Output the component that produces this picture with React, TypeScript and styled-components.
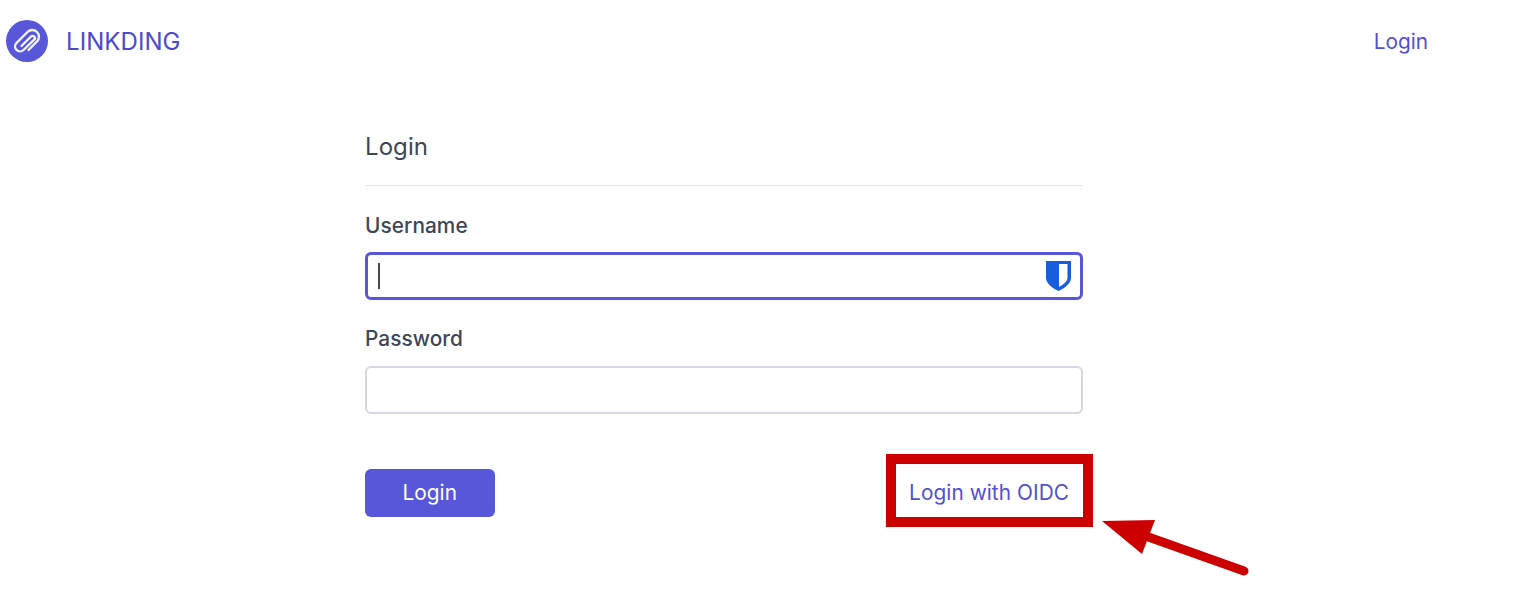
import React from "react";
import styled, { createGlobalStyle } from "styled-components";

const Global = createGlobalStyle`
  html, body { margin: 0; padding: 0; background: #fff; }
  body { font-family: Inter, "Liberation Sans", sans-serif; overflow: hidden; letter-spacing: 0.07px; }
`;

const Page = styled.div`
  position: relative;
  width: 1516px;
  height: 614px;
  overflow: hidden;
`;

const Header = styled.header`
  display: flex;
  align-items: center;
  justify-content: space-between;
  height: 42px;
  padding: 20px 88px 0 6px;
`;

const Brand = styled.a`
  display: flex;
  align-items: center;
  gap: 18px;
  font-size: 24px;
  color: #4b4ad0;
`;

const NavLink = styled.a`
  font-size: 20.8px;
  letter-spacing: 0;
  color: #5250d2;
`;

const Main = styled.main`
  display: flex;
  flex-direction: column;
  width: 718px;
  margin: 0 0 0 365px;
  padding-top: 62px;
`;

const Title = styled.h2`
  margin: 0;
  height: 61px;
  line-height: 45px;
  font-size: 24px;
  font-weight: 400;
  color: #3d4657;
  border-bottom: 1px solid #e5e7eb;
`;

const Label = styled.label<{ $top: number; $gap: number }>`
  display: block;
  margin-top: ${(p) => p.$top}px;
  margin-bottom: ${(p) => p.$gap}px;
  height: 26px;
  line-height: 26px;
  font-size: 20.8px;
  font-weight: 500;
  color: #3d4657;
`;

const Field = styled.div<{ $focus?: boolean }>`
  position: relative;
  box-sizing: border-box;
  height: 48px;
  border-radius: 6px;
  background: #fff;
  border: ${(p) => (p.$focus ? "3px solid #5856d9" : "2px solid #d5d8e3")};
`;

const Caret = styled.span`
  position: absolute;
  left: 10px;
  top: 8px;
  width: 2px;
  height: 26px;
  background: #3f4859;
`;

const ShieldIcon = styled.svg`
  position: absolute;
  right: 9px;
  top: 6px;
`;

const Actions = styled.div`
  display: flex;
  align-items: center;
  justify-content: space-between;
  margin-top: 55px;
  height: 48px;
`;

const Button = styled.button`
  width: 129.5px;
  height: 48px;
  border: 0;
  padding: 0 0 2px;
  border-radius: 6px;
  background: #5856d9;
  color: #fff;
  font: 400 20.8px Inter, "Liberation Sans", sans-serif;
  letter-spacing: 0.07px;
`;

const OidcLink = styled.a`
  position: relative;
  margin: 0 14px 2px 0;
  font-size: 20.8px;
  color: #5250d2;
`;

const Highlight = styled.span`
  position: absolute;
  left: -23px;
  right: -24px;
  top: -26px;
  bottom: -22px;
  border: 10px solid #cc0000;
  pointer-events: none;
`;

const Arrow = styled.svg`
  position: absolute;
  left: 1100px;
  top: 518px;
`;

export default function App() {
  return (
    <Page>
      <Global />
      <Header>
        <Brand>
          <svg width="42" height="42" viewBox="0 0 42 42">
            <circle cx="21" cy="21" r="21" fill="#5856d9" />
            <path
              d="M15.5 26 L25 16.5 a2.26 2.26 0 0 1 3.2 3.2 L17.5 30 a4.95 4.95 0 0 1 -7 -7 L21.5 12 a6.7 6.7 0 0 1 9.5 9.5 L22.5 30"
              fill="none"
              stroke="#fff"
              strokeOpacity="0.92"
              strokeWidth="2.4"
              strokeLinecap="round"
              strokeLinejoin="round"
            />
          </svg>
          LINKDING
        </Brand>
        <NavLink>Login</NavLink>
      </Header>
      <Main>
        <Title>Login</Title>
        <Label $top={27} $gap={13}>Username</Label>
        <Field $focus>
          <Caret />
          <ShieldIcon width="25" height="30" viewBox="0 0 25 30">
            <path d="M0 0 H25 V17 C25 22 19 27 12.5 30 C6 27 0 22 0 17 Z" fill="#175ddc" />
            <path d="M13 3 H21.5 V17 C21.5 20.5 17 23.8 13 26 Z" fill="#fff" />
          </ShieldIcon>
        </Field>
        <Label $top={26} $gap={14}>Password</Label>
        <Field />
        <Actions>
          <Button>Login</Button>
          <OidcLink>
            Login with OIDC
            <Highlight />
          </OidcLink>
        </Actions>
      </Main>
      <Arrow width="152" height="60" viewBox="0 0 152 60">
        <path d="M144 53 L40 16" stroke="#cc0000" strokeWidth="9" strokeLinecap="round" fill="none" />
        <path d="M2 3 L55 2 L42 36 Z" fill="#cc0000" />
      </Arrow>
    </Page>
  );
}
